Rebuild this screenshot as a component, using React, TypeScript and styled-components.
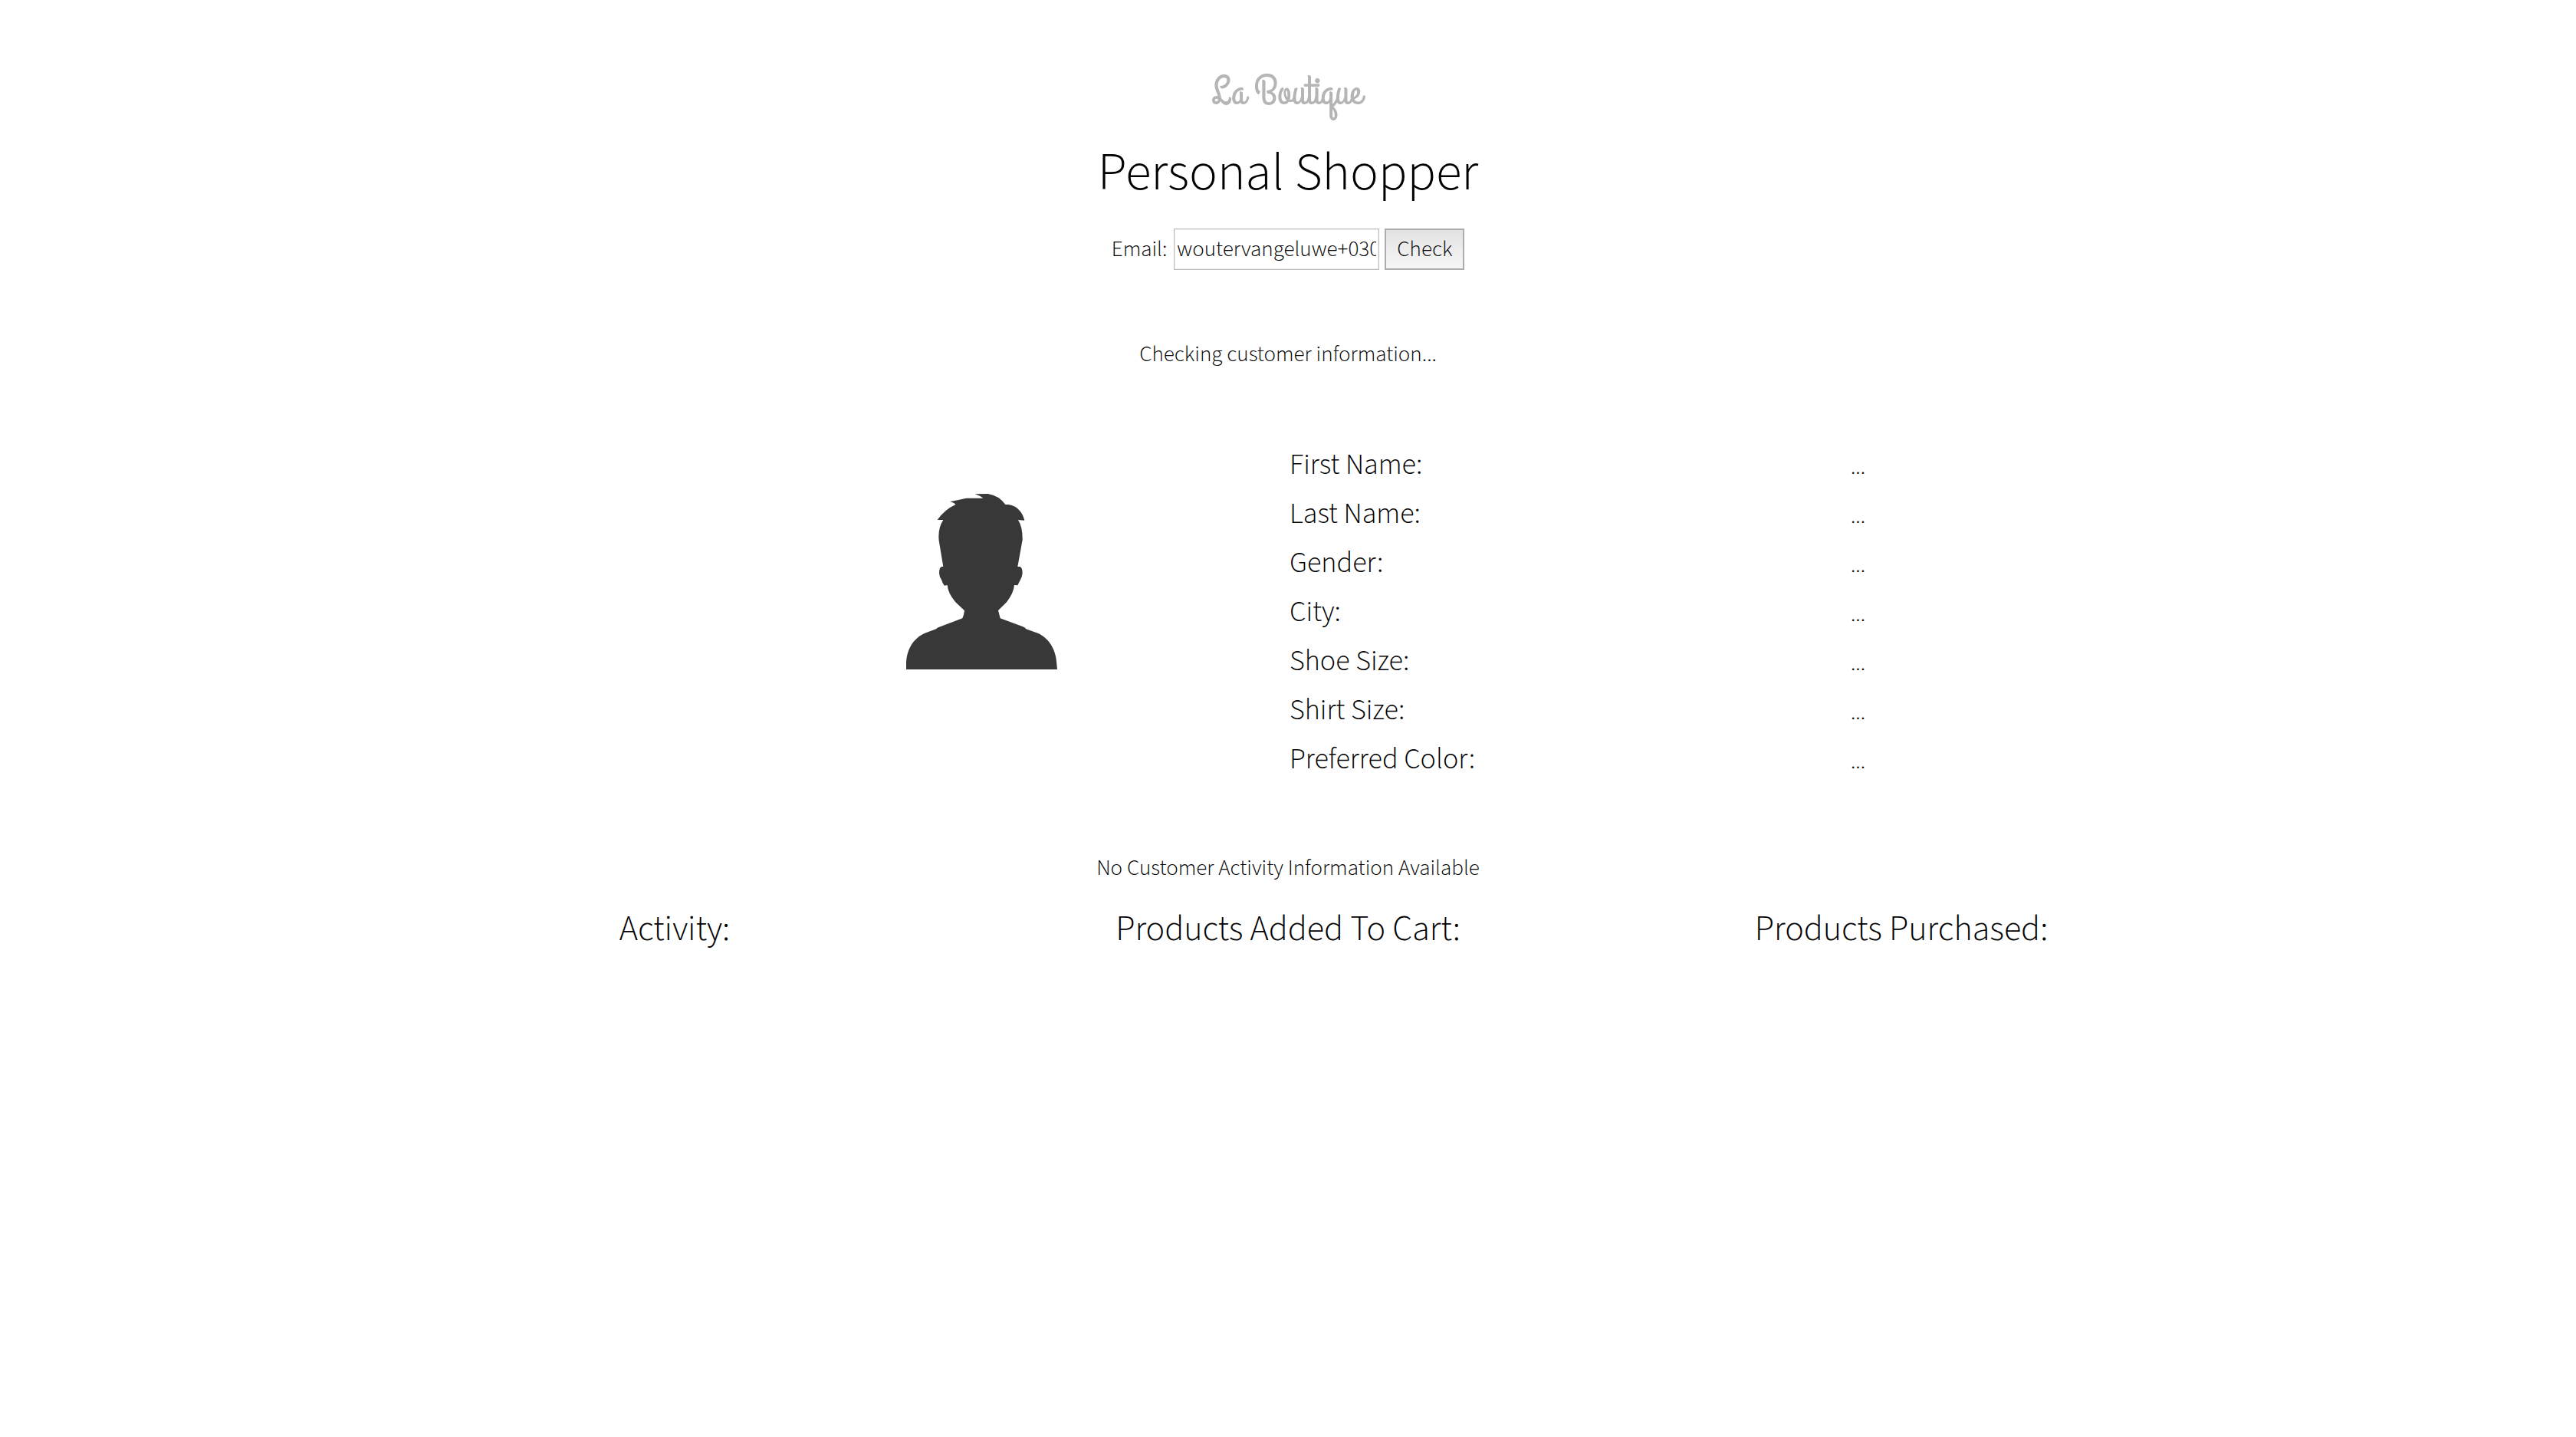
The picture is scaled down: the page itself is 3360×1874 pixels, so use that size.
import React, { useState } from "react";
import styled, { createGlobalStyle } from "styled-components";

const GlobalStyle = createGlobalStyle`
  *, *::before, *::after { box-sizing: border-box; }
  body {
    margin: 0;
    background: #fff;
    color: #000;
    font-family: "Adobe Clean", "Source Sans 3", "Source Sans Pro", Lato, "Open Sans", sans-serif;
    font-weight: 300;
    font-size: 29px;
    line-height: 36px;
    font-variant-ligatures: none;
  }
`;

const Page = styled.main`
  display: flex;
  flex-direction: column;
  align-items: center;
  padding: 85px 24px 48px;
`;

const Logo = styled.div`
  padding-right: 4px;
  color: #b5b5b5;
  font-family: "Grand Hotel", Lato, cursive;
  font-weight: 400;
  font-size: 52px;
  line-height: 72px;
`;

const Title = styled.h1`
  margin: 25px 0 0;
  font-size: 69px;
  line-height: 88px;
  font-weight: 300;
`;

const LookupForm = styled.form`
  display: flex;
  align-items: center;
  gap: 7px;
  margin-top: 28px;
`;

const EmailInput = styled.input`
  width: 268px;
  height: 54px;
  margin-left: 2px;
  padding: 0 3px;
  border: 1px solid #bbb;
  border-radius: 0;
  background: #fff;
  box-shadow: inset 0 0 0 1px #eee;
  color: inherit;
  font: inherit;
  outline: none;
`;

const CheckButton = styled.button`
  width: 104px;
  height: 54px;
  padding: 0;
  border: 2px solid #adadad;
  border-radius: 0;
  background: linear-gradient(#e2e2e2, #f7f7f7);
  color: inherit;
  font: inherit;
`;

const Status = styled.p`
  margin: 92px 0 0;
`;

const Profile = styled.section`
  display: grid;
  grid-template-columns: 1fr 1fr;
  align-items: start;
  width: 100%;
  max-width: 1600px;
  margin-top: 94px;
`;

const Avatar = styled.svg`
  justify-self: center;
  width: 197px;
  height: 229px;
  margin-top: 70px;
  fill: #383838;
`;

const Details = styled.table`
  width: 100%;
  border-collapse: collapse;
  line-height: 64px;
`;

const FieldName = styled.th`
  padding: 0 2px;
  font-size: 38px;
  font-weight: 300;
  text-align: left;
  vertical-align: baseline;
`;

const FieldValue = styled.td`
  width: 66px;
  padding: 0;
  line-height: 36px;
  vertical-align: baseline;
`;

const Columns = styled.section`
  display: grid;
  grid-template-columns: repeat(3, 1fr);
  width: 100%;
  max-width: 2400px;
  margin-top: 34px;
`;

const ColumnTitle = styled.h2`
  margin: 0;
  font-size: 46px;
  line-height: 56px;
  font-weight: 300;
  text-align: center;
`;

const fields = [
  "First Name:",
  "Last Name:",
  "Gender:",
  "City:",
  "Shoe Size:",
  "Shirt Size:",
  "Preferred Color:",
];

const columns = ["Activity:", "Products Added To Cart:", "Products Purchased:"];

export default function App() {
  const [email, setEmail] = useState("woutervangeluwe+03062019");

  return (
    <>
      <GlobalStyle />
      <Page>
        <Logo>La Boutique</Logo>
        <Title>Personal Shopper</Title>
        <LookupForm onSubmit={(e) => e.preventDefault()}>
          <label htmlFor="email">Email:</label>
          <EmailInput
            id="email"
            type="text"
            value={email}
            onChange={(e) => setEmail(e.target.value)}
          />
          <CheckButton type="submit">Check</CheckButton>
        </LookupForm>
        <Status>Checking customer information...</Status>
        <Profile>
          <Avatar viewBox="65 69 591 687" role="img" aria-label="Customer">
            <path d="M65 756V735C66 675 95 633 138 614L182 598Q186 592 194 590L285 556Q291 543 293 526L258 493Q228 457 226 426L214 428Q206 416 203 405Q194 392 194 379Q194 356 204 354H210L193 252Q188 205 210 171H187Q215 131 258 111Q256 105 236 100Q268 93 300 86H366Q353 76 334 70L385 69Q427 75 453 111C490 107 521 137 528 173L503 171Q521 200 520 249L501 354H511Q520 360 520 379Q519 392 512 405L501 427L488 426Q486 456 458 493L425 525L433 556L522 589Q530 592 534 598L580 614C626 634 652 682 654 735L656 756Z" />
          </Avatar>
          <Details>
            <tbody>
              {fields.map((name) => (
                <tr key={name}>
                  <FieldName scope="row">{name}</FieldName>
                  <FieldValue>...</FieldValue>
                </tr>
              ))}
            </tbody>
          </Details>
        </Profile>
        <Status>No Customer Activity Information Available</Status>
        <Columns>
          {columns.map((title) => (
            <ColumnTitle key={title}>{title}</ColumnTitle>
          ))}
        </Columns>
      </Page>
    </>
  );
}
